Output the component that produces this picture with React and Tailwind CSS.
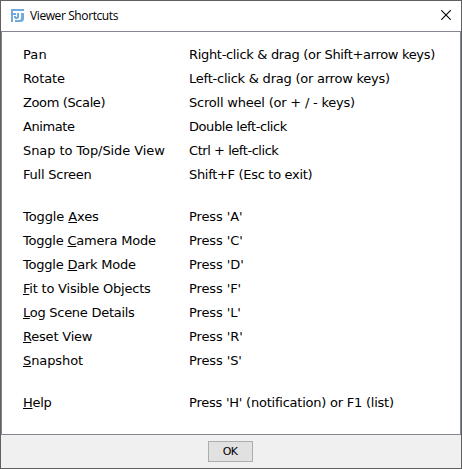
const GROUPS = [
  [
    { label: 'Pan', labelFit: 'tracking-[0.1px]', keys: 'Right-click & drag (or Shift+arrow keys)', keysFit: 'tracking-[-0.32px]' },
    { label: 'Rotate', labelFit: 'tracking-[-0.1px]', keys: 'Left-click & drag (or arrow keys)', keysFit: 'tracking-[-0.23px]' },
    { label: 'Zoom (Scale)', labelFit: 'tracking-[-0.38px]', keys: 'Scroll wheel (or + / - keys)', keysFit: 'tracking-[-0.21px]' },
    { label: 'Animate', labelFit: 'tracking-[-0.4px]', keys: 'Double left-click', keysFit: 'tracking-[-0.42px]' },
    { label: 'Snap to Top/Side View', labelFit: 'tracking-[-0.08px]', keys: 'Ctrl + left-click', keysFit: 'tracking-[-0.45px]' },
    { label: 'Full Screen', labelFit: 'tracking-[-0.23px]', keys: 'Shift+F (Esc to exit)', keysFit: 'tracking-[-0.31px]' },
  ],
  [
    { label: 'Toggle Axes', mnemonic: 7, labelFit: 'tracking-[-0.1px]', keys: "Press 'A'" },
    { label: 'Toggle Camera Mode', mnemonic: 7, labelFit: 'tracking-[-0.21px]', keys: "Press 'C'" },
    { label: 'Toggle Dark Mode', mnemonic: 7, labelFit: 'tracking-[-0.22px]', keys: "Press 'D'" },
    { label: 'Fit to Visible Objects', mnemonic: 0, labelFit: 'tracking-[-0.21px]', keys: "Press 'F'" },
    { label: 'Log Scene Details', mnemonic: 0, labelFit: 'tracking-[-0.27px]', keys: "Press 'L'" },
    { label: 'Reset View', mnemonic: 0, labelFit: 'tracking-[-0.2px]', keys: "Press 'R'" },
    { label: 'Snapshot', mnemonic: 0, labelFit: 'tracking-[-0.1px]', keys: "Press 'S'" },
  ],
  [
    { label: 'Help', mnemonic: 0, labelFit: 'tracking-[-0.3px]', keys: "Press 'H' (notification) or F1 (list)", keysFit: 'tracking-[-0.23px]' },
  ],
];

function Label({ text, mnemonic, className }) {
  if (mnemonic === undefined) return <span className={className}>{text}</span>;
  return (
    <span className={className}>
      {text.slice(0, mnemonic)}
      <span className="underline decoration-1 underline-offset-1 [text-decoration-skip-ink:none]">{text[mnemonic]}</span>
      {text.slice(mnemonic + 1)}
    </span>
  );
}

function AppIcon() {
  return (
    <svg width="14" height="14" viewBox="0 0 14 14" className="mt-[2px] shrink-0" fill="#74a9dc">
      <path d="M0 0H13V2H2V4H5V6H2V13H0Z" />
      <path d="M3 7H5V9H3Z" />
      <path d="M6 4H8V8Q8 10 6 10H4V8H6Z" />
      <path d="M10 4H13V9.5Q13 13 9 13H4V11H8.5Q10 11 10 9Z" />
    </svg>
  );
}

export default function App() {
  return (
    <div className="flex h-[469px] w-[462px] flex-col border border-[#606062] bg-white text-black">
      <header className="flex h-[30px] shrink-0 items-center pr-[10px] pb-[2px] pl-[10px]">
        <AppIcon />
        <h1 className="mt-[2px] ml-[5px] font-['Open_Sans',sans-serif] text-[12px] leading-4 tracking-[-0.4px] whitespace-nowrap">
          Viewer Shortcuts
        </h1>
        <button aria-label="Close" className="ml-auto">
          <svg width="10" height="10" viewBox="0 0 10 10" stroke="#000" strokeWidth="1.1" fill="none">
            <path d="M.3 .3L9.7 9.7M9.7 .3L.3 9.7" />
          </svg>
        </button>
      </header>
      <main className="flex h-[404px] shrink-0 flex-col gap-[18px] border border-[#828790] pt-[11px] pl-[21px] font-['DejaVu_Sans',sans-serif] text-[13px] leading-6 tracking-[-0.1px]">
        {GROUPS.map((group, i) => (
          <section key={i}>
            {group.map((row) => (
              <div key={row.label} className="grid h-6 grid-cols-[166px_1fr] whitespace-nowrap">
                <Label text={row.label} mnemonic={row.mnemonic} className={row.labelFit} />
                <span className={row.keysFit}>{row.keys}</span>
              </div>
            ))}
          </section>
        ))}
      </main>
      <footer className="flex flex-1 justify-center bg-[#f0f0f0] pt-[6px] pr-[2px]">
        <button className="h-[21px] w-[45px] border border-[#adadad] bg-[#e1e1e1] font-['DejaVu_Sans',sans-serif] text-[11px] leading-[19px] tracking-[-0.8px]">
          OK
        </button>
      </footer>
    </div>
  );
}
